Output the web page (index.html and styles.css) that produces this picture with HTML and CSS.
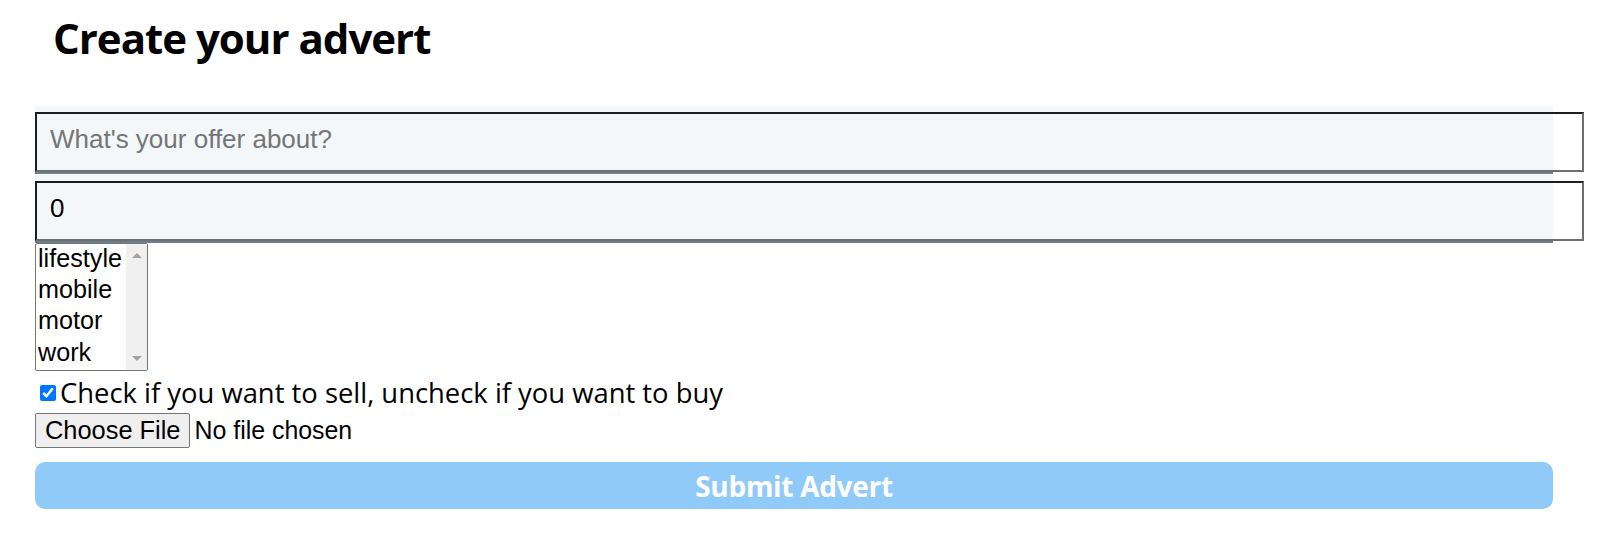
FILE: index.html
```html
<!DOCTYPE html>
<html lang="en">
<head>
<meta charset="utf-8">
<title>Create your advert</title>
<link rel="stylesheet" href="styles.css">
</head>
<body>
<div class="page">
  <h1 class="title">Create your advert</h1>
  <form class="advert-form">
    <div class="field">
      <input class="text-input" type="text" placeholder="What's your offer about?">
    </div>
    <div class="field field-next">
      <input class="text-input" type="number" value="0">
    </div>
    <div class="select-wrap">
      <select class="category" multiple>
        <option>lifestyle</option>
        <option>mobile</option>
        <option>motor</option>
        <option>work</option>
      </select>
      <div class="scrollbar" aria-hidden="true">
        <span class="arrow arrow-up"></span>
        <span class="arrow arrow-down"></span>
      </div>
    </div>
    <label class="sell-toggle">
      <input class="sell-check" type="checkbox" checked>
      <span class="sell-text">Check if you want to sell, uncheck if you want to buy</span>
    </label>
    <input class="file-input" type="file">
    <button class="submit" type="submit" disabled>Submit Advert</button>
  </form>
</div>
</body>
</html>
```

FILE: styles.css
```css
html, body {
  margin: 0;
  padding: 0;
  background: #ffffff;
}

body {
  font-family: "Open Sans", "Noto Sans", sans-serif;
  color: #000000;
}

.page {
  padding: 0 53px 0 35px;
}

.title {
  margin: 0 0 39px 0;
  padding: 9px 0 0 18px;
  font-size: 42px;
  line-height: 58px;
  font-weight: 700;
  letter-spacing: -1px;
}

.advert-form {
  display: flex;
  flex-direction: column;
  align-items: flex-start;
}

.field {
  align-self: stretch;
  background: #f3f7fa;
  border-bottom: 2px solid #6d7f8f;
  padding-top: 6px;
  height: 60px;
}

.field-next {
  margin-top: 1px;
}

.text-input {
  box-sizing: border-box;
  display: block;
  width: calc(100% + 31px);
  height: 60px;
  margin: 0;
  padding: 0 13px 5px 13px;
  border-width: 2px;
  border-style: solid;
  border-color: #1e1e1e #6f6f6f #6f6f6f #1e1e1e;
  background: transparent;
  font-family: "Liberation Sans", Arial, sans-serif;
  font-size: 26px;
  color: #000000;
  outline: none;
  -moz-appearance: textfield;
}

.text-input::placeholder {
  color: #757575;
}

.text-input::-webkit-inner-spin-button,
.text-input::-webkit-outer-spin-button {
  -webkit-appearance: none;
  margin: 0;
}

.select-wrap {
  position: relative;
  width: 113px;
  height: 128px;
}

.category {
  box-sizing: border-box;
  display: block;
  width: 113px;
  height: 128px;
  margin: 0;
  padding: 0;
  border: 1px solid #767676;
  border-radius: 2px;
  background: #ffffff;
  font-family: "Liberation Sans", Arial, sans-serif;
  font-size: 25.2px;
  color: #000000;
  overflow: hidden;
}

.category option {
  padding: 0 2px 1px 2px;
}

.scrollbar {
  position: absolute;
  top: 1px;
  right: 1px;
  bottom: 1px;
  width: 21px;
  background: #f0f0f0;
}

.arrow {
  position: absolute;
  left: 6px;
  width: 0;
  height: 0;
  border-left: 5px solid transparent;
  border-right: 5px solid transparent;
}

.arrow-up {
  top: 9px;
  border-bottom: 5px solid #a3a3a3;
}

.arrow-down {
  bottom: 9px;
  border-top: 5px solid #a3a3a3;
}

.sell-toggle {
  display: flex;
  align-items: center;
  height: 42px;
  font-size: 27.4px;
  line-height: 36px;
  padding-top: 1px;
  box-sizing: border-box;
}

.sell-check {
  width: 16px;
  height: 16px;
  margin: 0 4px 0 5px;
  accent-color: #0075ff;
}

.file-input {
  height: 35px;
  margin: 0;
  padding: 0;
  font-family: "Liberation Sans", Arial, sans-serif;
  font-size: 24.9px;
  color: #000000;
}

.file-input::file-selector-button {
  box-sizing: border-box;
  height: 35px;
  margin: 0 4px 0 0;
  padding: 0 9px;
  border: 1px solid #767676;
  border-radius: 2px;
  background: #efefef;
  font-family: "Liberation Sans", Arial, sans-serif;
  font-size: 25.4px;
  color: #000000;
}

.submit {
  align-self: stretch;
  height: 47px;
  margin: 14px 0 0 0;
  padding: 0;
  border: none;
  border-radius: 10px;
  background: #90caf9;
  color: #ffffff;
  font-family: "Open Sans", "Noto Sans", sans-serif;
  font-size: 28px;
  font-weight: 700;
  letter-spacing: -0.3px;
}
```
